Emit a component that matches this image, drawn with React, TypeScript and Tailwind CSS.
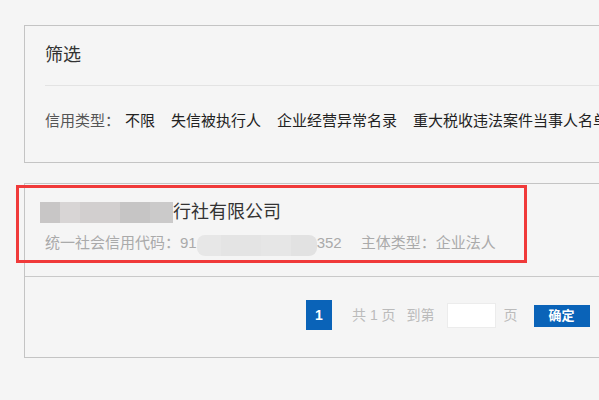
import React from "react";

const filters = ["不限", "失信被执行人", "企业经营异常名录", "重大税收违法案件当事人名单"];

function NameBlur() {
  return (
    <div className="flex h-[21px] w-[133px] -ml-[5px] mt-[1px] shrink-0">
      <div className="w-[20px] bg-[#c8c6c6]" />
      <div className="w-[20px] bg-[#d8d5d5]" />
      <div className="w-[40px] bg-[#d2cfcf]" />
      <div className="w-[30px] bg-[#c6c5c5]" />
      <div className="w-[23px] bg-[#cbcaca]" />
    </div>
  );
}

function CodeBlur() {
  return (
    <div className="flex h-[21px] w-[120px] mt-[3px] overflow-hidden rounded-[8px] shrink-0">
      <div className="w-[24px] bg-[#e7e7e7]" />
      <div className="w-[40px] bg-[#e4e4e4]" />
      <div className="w-[30px] bg-[#e6e6e6]" />
      <div className="w-[26px] bg-[#e2e2e2]" />
    </div>
  );
}

export default function App() {
  return (
    <div
      className="relative h-[400px] w-full overflow-hidden bg-[#f5f5f5] pt-[25px]"
      style={{ fontFamily: '"Liberation Sans", "Noto Sans CJK SC", sans-serif' }}
    >
      {/* filter panel */}
      <div className="ml-6 w-[640px] border border-[#c4c4c4] px-5">
        <div className="flex h-[60px] items-center border-b border-[#e3e3e3] text-[18px] text-[#333]">
          筛选
        </div>
        <div className="flex h-[76px] items-start pt-[24px] text-[15px] leading-[22px] whitespace-nowrap">
          <span className="mr-[5px] text-[#555]">信用类型：</span>
          {filters.map((f) => (
            <span key={f} className="mr-4 text-[#222]">
              {f}
            </span>
          ))}
        </div>
      </div>

      {/* results */}
      <div className="ml-6 mt-5 w-[640px] border border-[#c4c4c4]">
        <div className="h-[93px] border-b border-[#c9c9c9] px-5 pt-[16px]">
          <div className="flex h-6 items-center text-[18px] leading-6 text-[#333]">
            <NameBlur />
            <span>行社有限公司</span>
          </div>
          <div className="mt-2 flex text-[15px] leading-[22px] whitespace-nowrap text-[#aaa]">
            <span>统一社会信用代码：91</span>
            <CodeBlur />
            <span>352</span>
            <span className="ml-[19px]">主体类型：企业法人</span>
          </div>
        </div>
        <div className="h-[80px] pt-[23px]">
          <div className="ml-[281px] flex h-[30px] items-center text-[14px] text-[#bbb] whitespace-nowrap">
            <span className="flex h-[30px] w-[26px] items-center justify-center bg-[#0a63b8] text-[14px] font-bold text-white">
              1
            </span>
            <span className="ml-5">共 1 页</span>
            <span className="ml-[11px]">到第</span>
            <input className="ml-[12px] h-[25px] w-[49px] border border-[#ececec] bg-white outline-none" />
            <span className="ml-2">页</span>
            <button className="ml-4 mt-[2px] flex h-[22px] w-[56px] items-center justify-center bg-[#0a63b8] text-[13px] font-bold text-white">
              确定
            </button>
          </div>
        </div>
      </div>

      {/* highlight */}
      <div className="absolute left-4 top-[185px] h-[78px] w-[511px] border-[3px] border-[#f03a3a]" />
    </div>
  );
}
